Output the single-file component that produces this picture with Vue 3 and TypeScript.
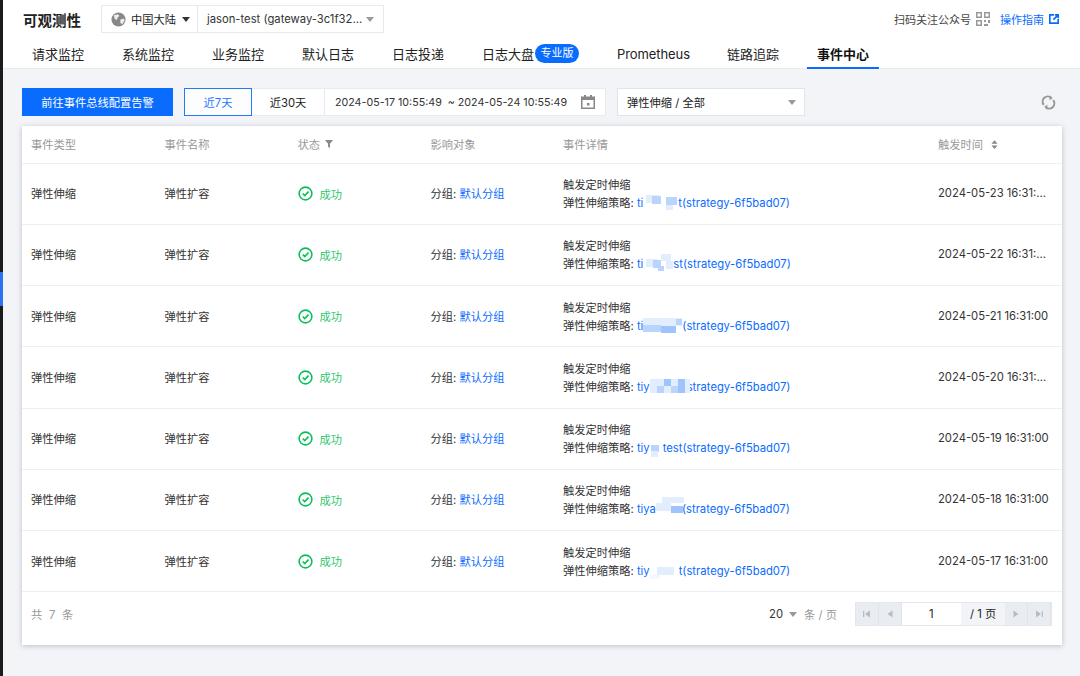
<script setup lang="ts">
interface Patch { x: number; y: number; w: number; h: number; c: string }
interface Row { date: string; time: string; prefix: string; gap: number; suffix: string; patches: Patch[] }

const tabs = ['请求监控', '系统监控', '业务监控', '默认日志', '日志投递', '日志大盘', 'Prometheus', '链路追踪', '事件中心']
const L = '#b9d4fd'
const P = '#e2edfe'
const M = '#9fc3fb'

const rows: Row[] = [
  { date: '2024-05-23', time: '16:31:...', prefix: 'ti', gap: 35, suffix: 't(strategy-6f5bad07)', patches: [
    { x: 3, y: -1, w: 13, h: 8, c: P }, { x: 9, y: 0, w: 9, h: 8, c: L }, { x: 18, y: 0, w: 6, h: 8, c: '#fff' }, { x: 23, y: 1, w: 11, h: 8, c: L }, { x: 23, y: 9, w: 7, h: 5, c: P }
  ] },
  { date: '2024-05-22', time: '16:31:...', prefix: 'ti', gap: 30, suffix: 'st(strategy-6f5bad07)', patches: [
    { x: 3, y: 2, w: 12, h: 8, c: P }, { x: 10, y: 3, w: 8, h: 8, c: L }, { x: 15, y: 9, w: 6, h: 5, c: L }, { x: 18, y: -3, w: 10, h: 7, c: P }, { x: 23, y: 4, w: 7, h: 8, c: P }
  ] },
  { date: '2024-05-21', time: '16:31:00', prefix: 'ti', gap: 39, suffix: '(strategy-6f5bad07)', patches: [
    { x: 0, y: -1, w: 39, h: 8, c: P }, { x: 0, y: 6, w: 18, h: 7, c: L }, { x: 18, y: 7, w: 15, h: 7, c: M }, { x: 33, y: 0, w: 6, h: 6, c: L }
  ] },
  { date: '2024-05-20', time: '16:31:...', prefix: 'tiy', gap: 37, suffix: 'strategy-6f5bad07)', patches: [
    { x: 0, y: -1, w: 40, h: 14, c: P }, { x: 7, y: 6, w: 7, h: 7, c: L }, { x: 14, y: -1, w: 7, h: 7, c: M }, { x: 28, y: -1, w: 7, h: 14, c: M }, { x: 21, y: 6, w: 7, h: 7, c: L }
  ] },
  { date: '2024-05-19', time: '16:31:00', prefix: 'tiy', gap: 13, suffix: 'test(strategy-6f5bad07)', patches: [
    { x: 1, y: 4, w: 8, h: 7, c: L }, { x: 1, y: 10, w: 7, h: 6, c: P }, { x: 9, y: 0, w: 6, h: 3, c: '#fff' }
  ] },
  { date: '2024-05-18', time: '16:31:00', prefix: 'tiya', gap: 26, suffix: '(strategy-6f5bad07)', patches: [
    { x: 6, y: -5, w: 22, h: 6, c: P }, { x: 0, y: 1, w: 15, h: 8, c: P }, { x: 15, y: 4, w: 12, h: 7, c: M }
  ] },
  { date: '2024-05-17', time: '16:31:00', prefix: 'tiy', gap: 29, suffix: 't(strategy-6f5bad07)', patches: [
    { x: 0, y: 0, w: 6, h: 3, c: '#fff' }, { x: 13, y: -1, w: 16, h: 7, c: '#fff' }, { x: 7, y: 3, w: 17, h: 8, c: P }, { x: 0, y: 11, w: 10, h: 4, c: '#f4f7fe' }
  ] }
]

function patchStyle(p: Patch) {
  return { left: `${p.x}px`, top: `${p.y}px`, width: `${p.w}px`, height: `${p.h}px`, background: p.c }
}
</script>

<template>
  <div class="page">
    <aside class="rail"><span class="rail-mark"></span></aside>
    <div class="main">
      <header class="header">
        <div class="top">
          <h1 class="title">可观测性</h1>
          <div class="region">
            <svg class="globe" viewBox="0 0 16 16"><circle cx="8" cy="8" r="7.5" fill="#888" /><path d="M3 3.5l4-1 2 1.5-2 2-1 2.5-2-1zM10 8l3.5-1 1 2-2.5 4-2-1.5z" fill="#eee" /></svg>
            <span>中国大陆</span>
            <i class="caret caret-dark"></i>
          </div>
          <div class="gateway">
            <span>jason-test (gateway-3c1f32...</span>
            <i class="caret"></i>
          </div>
          <div class="top-right">
            <span>扫码关注公众号</span>
            <svg class="qr" viewBox="0 0 14 14"><path d="M0 0h6v6H0zM1.500 1.500v3h3v-3zM8 0h6v6H8zM9.500 1.500v3h3v-3zM0 8h6v6H0zM1.500 9.500v3h3v-3zM8 8h2v2H8zM12 8h2v3h-2zM8 12h4v2H8z" fill="#999" fill-rule="evenodd" /></svg>
            <a class="guide">操作指南</a>
            <svg class="ext" viewBox="0 0 12 12"><path d="M0 0h6v2H2v8h8V6h2v6H0z M7 0h5v5H10V3.500L6 7.500 4.500 6l4-4H7z" fill="#0a6cff" /></svg>
          </div>
        </div>
        <nav class="tabs">
          <div v-for="(t, i) in tabs" :key="t" class="tab" :class="{ active: i === 8 }">
            <span>{{ t }}</span>
            <em v-if="i === 5" class="badge">专业版</em>
          </div>
        </nav>
      </header>

      <section class="content">
        <div class="toolbar">
          <button class="primary">前往事件总线配置告警</button>
          <div class="range">
            <span class="seg seg-on">近7天</span>
            <span class="seg">近30天</span>
            <div class="dates">
              <span>2024-05-17 10:55:49 &nbsp;~ 2024-05-24 10:55:49</span>
              <svg class="cal" viewBox="0 0 14 14"><path d="M3 0h2v1.500h4V0h2v1.500h3V14H0V1.500h3zM1.500 5v7.500h11V5z" fill="#888" fill-rule="evenodd" /><rect x="6" y="8" width="2.500" height="2.500" fill="#888" /></svg>
            </div>
          </div>
          <div class="filter">
            <span>弹性伸缩 / 全部</span>
            <i class="caret"></i>
          </div>
          <svg class="refresh" viewBox="0 0 16 16" fill="none" stroke="#999" stroke-width="2.200"><path d="M3 10.500A5.500 5.500 0 0 1 11 3" /><path d="M13 5.500A5.500 5.500 0 0 1 5 13" /><path d="M9.500 0.500L12.500 3.500 9 5.500z" fill="#999" stroke="none" /><path d="M6.500 15.500L3.500 12.500 7 10.500z" fill="#999" stroke="none" /></svg>
        </div>

        <div class="card">
          <div class="grid head">
            <div>事件类型</div>
            <div>事件名称</div>
            <div class="with-icon">状态
              <svg class="funnel" viewBox="0 0 10 10"><path d="M0 0h10L6.200 4.800V10L3.800 8.500V4.800z" fill="#888" /></svg>
            </div>
            <div>影响对象</div>
            <div>事件详情</div>
            <div class="with-icon">触发时间
              <svg class="sort" viewBox="0 0 8 10"><path d="M4 0l3.500 4h-7zM4 10L.5 6h7z" fill="#888" /></svg>
            </div>
          </div>
          <div v-for="r in rows" :key="r.date" class="grid row">
            <div class="plain">弹性伸缩</div>
            <div class="plain">弹性扩容</div>
            <div class="status">
              <svg class="ok" viewBox="0 0 16 16" fill="none" stroke="#0abf5b" stroke-width="1.700"><circle cx="8" cy="8" r="6.800" /><path d="M5 8l2.200 2.200L11.200 6" /></svg>
              <span>成功</span>
            </div>
            <div class="plain">分组: <a class="link">默认分组</a></div>
            <div class="detail">
              <div>触发定时伸缩</div>
              <div>弹性伸缩策略: <a class="link">{{ r.prefix }}<span class="mask" :style="{ width: `${r.gap}px` }"><i v-for="(p, j) in r.patches" :key="j" :style="patchStyle(p)"></i></span>{{ r.suffix }}</a></div>
            </div>
            <div class="plain time">{{ r.date }} {{ r.time }}</div>
          </div>
          <footer class="foot">
            <span class="total">共 7 条</span>
            <div class="pager">
              <span class="size">20</span>
              <i class="caret"></i>
              <span class="unit">条 / 页</span>
              <div class="pages">
                <span class="pbtn"><svg viewBox="0 0 8 8"><path d="M0 1h1.200v6H0zM7 .5v7L2 4z" fill="#b5bcc6" /></svg></span>
                <span class="pbtn"><svg viewBox="0 0 8 8"><path d="M6.500 .5v7L1.500 4z" fill="#b5bcc6" /></svg></span>
                <span class="pinput">1</span>
                <span class="plabel">/ 1 页</span>
                <span class="pbtn"><svg viewBox="0 0 8 8"><path d="M1.500 .5v7l5-3.500z" fill="#b5bcc6" /></svg></span>
                <span class="pbtn"><svg viewBox="0 0 8 8"><path d="M8 1H6.800v6H8zM1 .5v7L6 4z" fill="#b5bcc6" /></svg></span>
              </div>
            </div>
          </footer>
        </div>
      </section>
    </div>
  </div>
</template>

<style scoped>
.page {
  display: flex;
  width: 1080px;
  height: 676px;
  overflow: hidden;
  background: #f2f4f8;
  color: #222;
  font-family: Inter, "Noto Sans CJK SC", sans-serif;
  font-size: 11.25px;
}
.rail {
  width: 3px;
  flex: none;
  background: #1c1c1c;
  padding-top: 272px;
}
.rail-mark {
  display: block;
  height: 34px;
  background: #2b72f0;
}
.main {
  flex: 1;
  min-width: 0;
}
.header {
  background: #fff;
  height: 69px;
  border-bottom: 1px solid #e9ebf0;
  box-sizing: border-box;
}
.top {
  display: flex;
  align-items: center;
  height: 40px;
  padding: 0 21px 0 20px;
  box-sizing: border-box;
}
.top > * {
  position: relative;
  top: -1px;
}
.title {
  margin: 0 18px 0 0;
  font-size: 14.500px;
  font-weight: 700;
  color: #222;
  width: 60px;
  white-space: nowrap;
}
.region,
.gateway {
  display: flex;
  align-items: center;
  height: 28px;
  box-sizing: border-box;
  border: 1px solid #e7eaef;
  background: #fff;
}
.region {
  width: 96px;
  padding-left: 9px;
  gap: 5px;
  border-right: 0;
}
.globe {
  width: 15px;
  height: 15px;
}
.gateway {
  width: 187px;
  padding: 0 9px;
  justify-content: space-between;
  color: #333;
  white-space: nowrap;
}
.caret {
  display: inline-block;
  flex: none;
  width: 0;
  height: 0;
  border-left: 4px solid transparent;
  border-right: 4px solid transparent;
  border-top: 5px solid #999;
}
.caret-dark {
  border-top-color: #333;
  margin-left: 1px;
}
.top-right {
  margin-left: auto;
  display: flex;
  align-items: center;
  color: #444;
  font-size: 11px;
  white-space: nowrap;
}
.qr {
  width: 14px;
  height: 14px;
  margin: 0 10px 0 5px;
}
.guide {
  color: #0a6cff;
}
.ext {
  width: 10px;
  height: 10px;
  margin-left: 5px;
}
.tabs {
  display: flex;
  gap: 18px;
  height: 29px;
  padding-left: 19px;
  font-size: 13px;
  color: #222;
}
.tab {
  display: flex;
  align-items: center;
  padding: 0 10px;
  height: 29px;
  box-sizing: border-box;
  white-space: nowrap;
}
.tab:nth-child(7) {
  letter-spacing: -0.1px;
}
.tab:nth-child(8) {
  margin-left: -1px;
}
.tab.active {
  font-weight: 700;
  color: #111;
  border-bottom: 2px solid #0a6cff;
  padding-top: 2px;
}
.tab > span {
  position: relative;
  top: -1px;
}
.badge {
  font-style: normal;
  font-size: 11px;
  color: #fff;
  background: #0a6cff;
  height: 19px;
  line-height: 19px;
  width: 44px;
  text-align: center;
  border-radius: 10px;
  margin: -2px 0 0 1px;
}
.content {
  padding: 0 18px 0 19px;
}
.toolbar {
  display: flex;
  align-items: center;
  box-sizing: border-box;
  height: 57px;
  padding-top: 9px;
}
.toolbar > * {
  flex: none;
}
.primary {
  width: 151px;
  height: 28px;
  margin-right: 11px;
  border: 0;
  padding: 0;
  background: #0a6cff;
  color: #fff;
  font: inherit;
}
.range {
  display: flex;
  height: 28px;
}
.seg {
  width: 73px;
  display: flex;
  align-items: center;
  justify-content: center;
  background: #fff;
  border: 1px solid #e7eaef;
  box-sizing: border-box;
  border-left: 0;
}
.seg-on {
  width: 68px;
  color: #0a6cff;
  border: 1px solid #0a6cff;
  opacity: 0.9;
}
.dates {
  width: 281px;
  display: flex;
  align-items: center;
  justify-content: space-between;
  box-sizing: border-box;
  padding: 0 10px 0 10px;
  background: #fff;
  border: 1px solid #e7eaef;
  border-left: 0;
  color: #333;
  font-size: 10.700px;
  white-space: nowrap;
}
.cal {
  width: 14px;
  height: 14px;
  flex: none;
}
.filter {
  width: 188px;
  height: 28px;
  box-sizing: border-box;
  margin-left: 11px;
  display: flex;
  align-items: center;
  justify-content: space-between;
  padding: 0 8px 0 9px;
  background: #fff;
  border: 1px solid #dfe3ea;
}
.refresh {
  width: 15px;
  height: 15px;
  margin-left: auto;
  margin-right: 6px;
}
.card {
  background: #fff;
  box-shadow: 0 1px 5px rgba(54, 58, 80, 0.28);
  height: 519px;
}
.grid {
  display: grid;
  grid-template-columns: 133.500px 133px 133px 132.500px 375px 133px;
  align-items: center;
  box-sizing: border-box;
  border-bottom: 1px solid #eceff4;
}
.grid > div {
  padding-left: 9px;
  min-width: 0;
}
.head {
  height: 37.500px;
  color: #999;
}
.with-icon {
  display: flex;
  align-items: center;
}
.funnel {
  width: 8px;
  height: 8px;
  margin-left: 5px;
}
.sort {
  width: 7px;
  height: 9px;
  margin-left: 8px;
}
.row {
  height: 61.250px;
  color: #333;
}
.plain {
  padding-bottom: 1px;
}
.status {
  display: flex;
  align-items: center;
  color: #2fc76f;
  gap: 7px;
}
.ok {
  width: 15px;
  height: 15px;
}
.link {
  color: #0a6cff;
}
.detail {
  line-height: 18px;
  padding-top: 1px;
}
.mask {
  display: inline-block;
  position: relative;
  height: 13px;
  vertical-align: -2px;
}
.mask i {
  position: absolute;
  display: block;
}
.time {
  white-space: nowrap;
}
.foot {
  display: flex;
  justify-content: space-between;
  align-items: center;
  height: 44px;
  padding: 0 10px 0 9px;
}
.total {
  color: #999;
  word-spacing: 3.500px;
}
.pager {
  display: flex;
  align-items: center;
  position: relative;
  left: 0;
}
.size {
  color: #333;
  margin-right: 6px;
}
.unit {
  color: #999;
  margin: 0 19px 0 7px;
  width: 32px;
  white-space: nowrap;
}
.pages {
  display: flex;
  height: 24px;
  border: 1px solid #e3e7ee;
  box-sizing: border-box;
  width: 197px;
}
.pbtn {
  width: 23px;
  display: flex;
  align-items: center;
  justify-content: center;
  background: #e9ecf1;
  border-right: 1px solid #dfe3ea;
  box-sizing: border-box;
}
.pbtn svg {
  width: 8px;
  height: 8px;
}
.pinput {
  width: 60px;
  text-align: center;
  line-height: 22px;
  background: #fff;
  color: #222;
}
.plabel {
  width: 45px;
  text-align: center;
  line-height: 22px;
  background: #f2f4f8;
  color: #222;
}
</style>
